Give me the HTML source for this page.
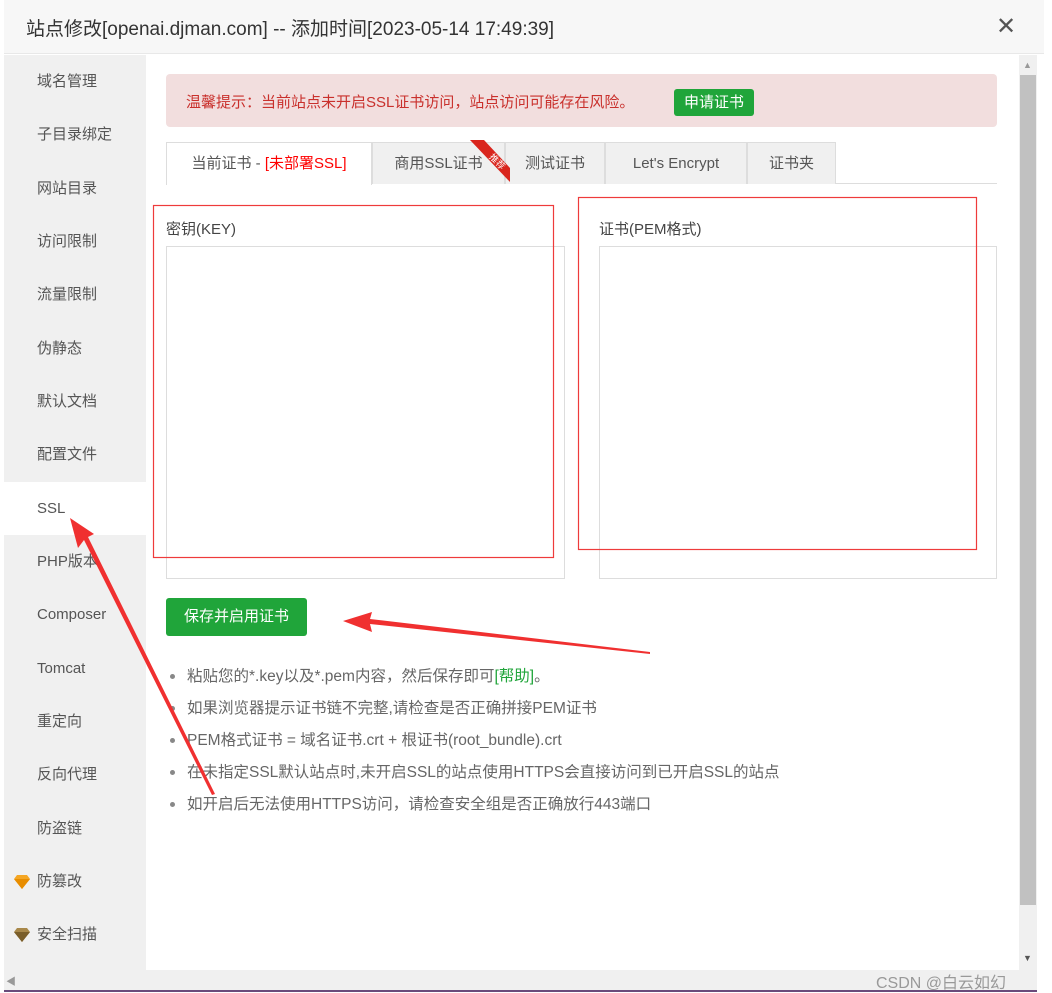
<!DOCTYPE html>
<html><head><meta charset="utf-8"><style>
*{margin:0;padding:0;box-sizing:border-box}
body{width:1052px;height:993px;background:#fff;position:relative;overflow:hidden;font-family:"Liberation Sans","Noto Sans CJK SC",sans-serif;color:#333}
.abs{position:absolute}
.title{left:4px;top:0;width:1040px;height:54px;background:#f7f7f7;border-bottom:1px solid #e8e8e8}
.title span{position:absolute;left:22px;top:14px;font-size:19px;color:#333}
.side{left:4px;top:55px;width:142px;height:915px;background:#f0f0f0}
.si{position:absolute;left:0;width:142px;height:53px;line-height:53px;padding-left:33px;font-size:15px;color:#555}
.si.on{background:#fff}
.si svg{position:absolute;left:10px;top:19px}
.alert{left:166px;top:74px;width:831px;height:53px;background:#f2dede;border-radius:4px;font-size:15px;color:#c9302c}
.btn{background:#20a53a;color:#fff;border-radius:3px;text-align:center}
.tab{top:142px;height:42px;line-height:42px;text-align:center;font-size:15px;color:#555;background:#f0f0f0;border:1px solid #ddd;border-bottom:none}
.ta{border:1px solid #ddd;background:#fff}
.lbl{font-size:15px;color:#444}
.li{left:170px;font-size:15.5px;color:#666}
.li b{display:inline-block;width:5px;height:5px;border-radius:50%;background:#888;margin-right:12px;vertical-align:middle}
</style></head><body>
<div class="abs title"><span>站点修改[openai.djman.com] -- 添加时间[2023-05-14 17:49:39]</span><span style="left:992px;top:12px;font-size:24px;color:#555;font-weight:300">✕</span></div>
<div class="abs side">
<div class="si" style="top:0">域名管理</div>
<div class="si" style="top:53px">子目录绑定</div>
<div class="si" style="top:107px">网站目录</div>
<div class="si" style="top:160px">访问限制</div>
<div class="si" style="top:213px">流量限制</div>
<div class="si" style="top:267px">伪静态</div>
<div class="si" style="top:320px">默认文档</div>
<div class="si" style="top:373px">配置文件</div>
<div class="si on" style="top:427px">SSL</div>
<div class="si" style="top:480px">PHP版本</div>
<div class="si" style="top:533px">Composer</div>
<div class="si" style="top:587px">Tomcat</div>
<div class="si" style="top:640px">重定向</div>
<div class="si" style="top:693px">反向代理</div>
<div class="si" style="top:747px">防盗链</div>
<div class="si" style="top:800px"><svg width="16" height="16"><polygon points="3,1 13,1 16,5 8,15 0,5" fill="#f5a623"/><polygon points="0,5 16,5 8,15" fill="#e88d00"/></svg>防篡改</div>
<div class="si" style="top:853px"><svg width="16" height="16"><polygon points="3,1 13,1 16,5 8,15 0,5" fill="#a8884a"/><polygon points="0,5 16,5 8,15" fill="#7a5e2a"/></svg>安全扫描</div>
</div>
<div class="abs alert"><span style="position:absolute;left:20px;top:17px">温馨提示：当前站点未开启SSL证书访问，站点访问可能存在风险。</span>
<div class="abs btn" style="left:508px;top:15px;width:80px;height:27px;line-height:27px;font-size:15px">申请证书</div></div>
<div class="abs" style="left:166px;top:183px;width:831px;height:1px;background:#ddd"></div>
<div class="abs tab" style="left:166px;width:206px;background:#fff;height:43px">当前证书 - <span style="color:#f00">[未部署SSL]</span></div>
<div class="abs tab" style="left:372px;width:133px">商用SSL证书</div>
<div class="abs tab" style="left:505px;width:100px">测试证书</div>
<div class="abs tab" style="left:605px;width:142px">Let's Encrypt</div>
<div class="abs tab" style="left:747px;width:89px">证书夹</div>
<svg class="abs" style="left:462px;top:136px" width="52" height="50"><polygon points="8,4 22,4 48,32 48,46" fill="#d9251d"/><text x="28" y="22" font-size="9" fill="#fff" transform="rotate(45 28 20)">推荐</text></svg>
<div class="abs lbl" style="left:166px;top:218px">密钥(KEY)</div>
<div class="abs lbl" style="left:599px;top:218px">证书(PEM格式)</div>
<div class="abs ta" style="left:166px;top:246px;width:399px;height:333px"></div>
<div class="abs ta" style="left:599px;top:246px;width:398px;height:333px"></div>
<div class="abs btn" style="left:166px;top:598px;width:141px;height:38px;line-height:38px;font-size:15px">保存并启用证书</div>
<div class="abs li" style="top:664px"><b></b>粘贴您的*.key以及*.pem内容，然后保存即可<span style="color:#20a53a">[帮助]</span>。</div>
<div class="abs li" style="top:696px"><b></b>如果浏览器提示证书链不完整,请检查是否正确拼接PEM证书</div>
<div class="abs li" style="top:728px"><b></b>PEM格式证书 = 域名证书.crt + 根证书(root_bundle).crt</div>
<div class="abs li" style="top:760px"><b></b>在未指定SSL默认站点时,未开启SSL的站点使用HTTPS会直接访问到已开启SSL的站点</div>
<div class="abs li" style="top:792px"><b></b>如开启后无法使用HTTPS访问，请检查安全组是否正确放行443端口</div>
<div class="abs" style="left:1019px;top:55px;width:18px;height:915px;background:#f0f0f0"></div>
<div class="abs" style="left:1020px;top:75px;width:16px;height:830px;background:#c1c1c1"></div>
<div class="abs" style="left:1023px;top:60px;font-size:9px;color:#999">▲</div>
<div class="abs" style="left:1023px;top:953px;font-size:9px;color:#555">▼</div>
<div class="abs" style="left:4px;top:970px;width:1033px;height:20px;background:#f0f0f0"></div>
<div class="abs" style="left:6px;top:973px;font-size:10px;color:#999">◀</div>
<div class="abs" style="left:4px;top:990px;width:1033px;height:2px;background:#6a4a7a"></div>
<div class="abs" style="left:876px;top:969px;font-size:16px;color:#999">CSDN @白云如幻</div>
<svg class="abs" style="left:0;top:0" width="1052" height="993">
<rect x="153.5" y="205.5" width="400" height="352" fill="none" stroke="#ee3b3b" stroke-width="1.2"/>
<rect x="578.5" y="197.5" width="398" height="352" fill="none" stroke="#ee3b3b" stroke-width="1.2"/>
<polygon points="212,795 84,540 78,548 70,518 94,534 88,537 215,794" fill="#f03030"/>
<polygon points="650,654 370,624 372,632 343,621 372,612 370,619 650,652" fill="#f03030"/>
</svg>
</body></html>
